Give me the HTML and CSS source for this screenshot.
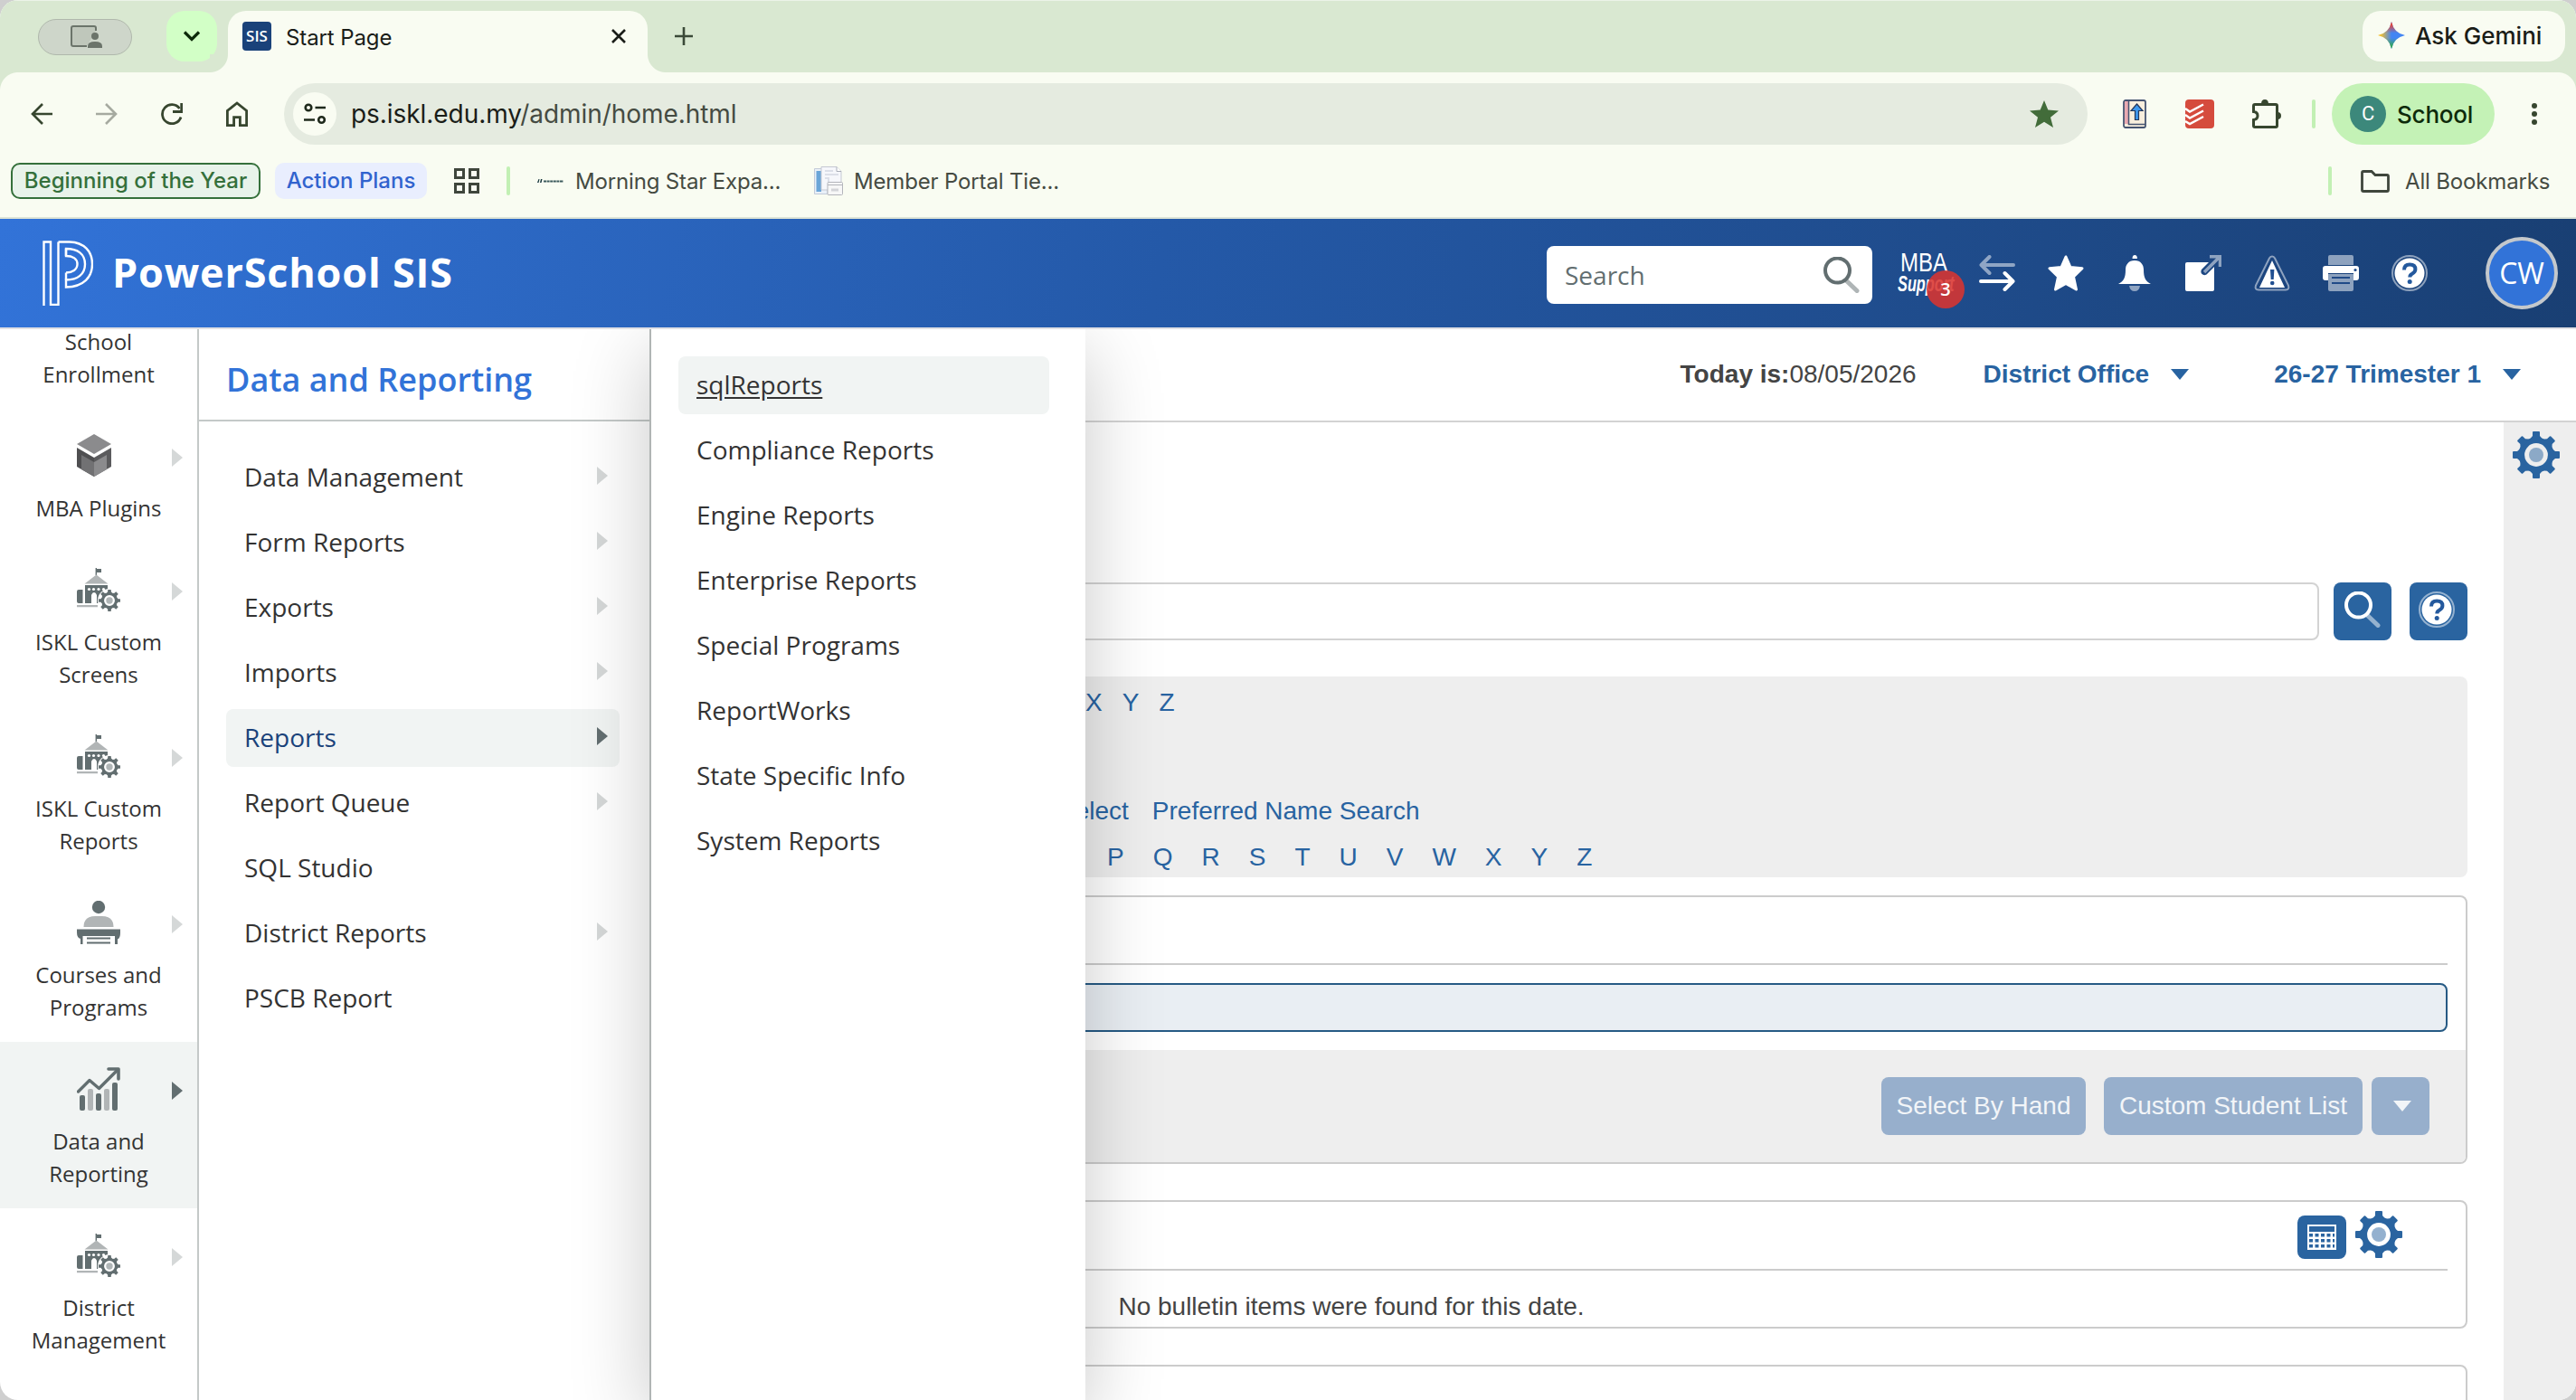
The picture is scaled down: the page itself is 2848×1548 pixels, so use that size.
FILE: index.html
```html
<!DOCTYPE html>
<html lang="en">
<head>
    <meta charset="UTF-8">
    <title>Start Page</title>
    <link rel="stylesheet" href="styles.css">
</head>
<body>
    <!-- Shared icons -->
    <svg class="defs" width="0" height="0">
        <symbol id="i-gear" viewBox="-26 -26 52 52">
            <circle r="16.200" fill="none" stroke="currentColor" stroke-width="6.600"/>
            <g fill="currentColor">
                <path id="tooth" d="M-7.500-17L-4-21V-25q0-1 1-1H3q1 0 1 1V-21L7.500-17z"/>
                <use href="#tooth" transform="rotate(45)"/>
                <use href="#tooth" transform="rotate(90)"/>
                <use href="#tooth" transform="rotate(135)"/>
                <use href="#tooth" transform="rotate(180)"/>
                <use href="#tooth" transform="rotate(225)"/>
                <use href="#tooth" transform="rotate(270)"/>
                <use href="#tooth" transform="rotate(315)"/>
            </g>
            <circle r="8" fill="currentColor" opacity=".5"/>
        </symbol>
        <symbol id="i-school" viewBox="0 0 48 48">
            <path fill="#626e70" d="M20.600 0H22v1h5v4h-5v3h-1.400zM9 19h25v2H9zM0 26q0-2 2-2h4.500v15H2q-2 0-2-2z"/>
            <path fill="#b1b5b6" d="M21.500 7.500L34.500 17.500H8.500zM0 41h23v2.200H0z"/>
            <path fill="#626e70" fill-rule="evenodd" d="M9 19h25v5h-4l-3 5-3 3v7h-2V30q-1-3-3-3t-3 3v9H9z"/>
            <g fill="#fff"><circle cx="13.500" cy="23.500" r="1.600"/><circle cx="18.500" cy="23.500" r="1.600"/><circle cx="24" cy="23.500" r="1.600"/><circle cx="29.500" cy="23.500" r="1.600"/><circle cx="36" cy="36" r="13"/></g>
            <svg x="24" y="24" width="24" height="24" color="#626e70"><use href="#i-gear"/></svg>
        </symbol>
        <symbol id="i-search" viewBox="0 0 40 40">
            <path d="M26 27l11 10.500" stroke="currentColor" stroke-width="5" stroke-linecap="round" opacity=".5"/>
            <circle cx="15.500" cy="15" r="13.500" fill="none" stroke="currentColor" stroke-width="4"/>
        </symbol>
        <symbol id="i-help" viewBox="0 0 40 40">
            <circle cx="20" cy="20" r="19" fill="none" stroke="#fff" stroke-opacity=".5" stroke-width="2"/>
            <circle cx="20" cy="20" r="16.500" fill="#fff"/>
            <path d="M14 16.500q0-6 6.200-6t6.200 5.200q0 3-3.600 5-2.500 1.300-2.500 3.800" fill="none" stroke="#24599d" stroke-width="4"/>
            <circle cx="20.200" cy="29.500" r="2.500" fill="#24599d"/>
        </symbol>
    </svg>

    <div class="window">
        <!-- Tab strip -->
        <div class="tabstrip">
            <div class="share-pill">
                <svg width="36" height="26" viewBox="0 0 36 26"><path d="M18 23H3q-2 0-2-2V3q0-2 2-2h23q2 0 2 2v3" fill="#bfc7bb" stroke="#6b746a" stroke-width="2"/><circle cx="27" cy="12" r="4" fill="#6b746a"/><path d="M19 25v-2q0-5 8-5t8 5v2z" fill="#6b746a"/></svg>
            </div>
            <div class="tab-search"><svg width="20" height="12" viewBox="0 0 20 12"><path d="M2 1.500l8 8 8-8" fill="none" stroke="#0d2a0a" stroke-width="3.200"/></svg></div>
            <div class="tab">
                <span class="favicon">SIS</span>
                <span class="tab-title">Start Page</span>
                <svg width="16" height="16" viewBox="0 0 16 16"><path d="M1 1l14 14M15 1L1 15" stroke="#1a1d18" stroke-width="2.600"/></svg>
            </div>
            <svg class="plus" width="20" height="20" viewBox="0 0 20 20"><path d="M10 0v20M0 10h20" stroke="#3b4a38" stroke-width="2.600"/></svg>
            <div class="gemini">
                <svg width="30" height="30" viewBox="0 0 30 30">
                    <defs>
                        <linearGradient id="g1" x1="0" x2="1"><stop offset=".1" stop-color="#f4c02c"/><stop offset=".5" stop-color="#4285f4"/></linearGradient>
                        <linearGradient id="g2" x1="0" x2="0" y1="0" y2="1"><stop offset=".1" stop-color="#ea4335"/><stop offset=".42" stop-color="#ea4335" stop-opacity="0"/><stop offset=".6" stop-color="#34a853" stop-opacity="0"/><stop offset=".9" stop-color="#34a853"/></linearGradient>
                    </defs>
                    <path d="M15 0Q17.500 12.500 30 15 17.500 17.500 15 30 12.500 17.500 0 15 12.500 12.500 15 0z" fill="url(#g1)"/>
                    <path d="M15 0Q17.500 12.500 30 15 17.500 17.500 15 30 12.500 17.500 0 15 12.500 12.500 15 0z" fill="url(#g2)"/>
                </svg>
                <span>Ask Gemini</span>
            </div>
        </div>

        <!-- Toolbar -->
        <div class="toolbar">
            <div class="nav-icons">
                <svg width="24" height="24" viewBox="0 0 24 24"><path d="M24 12H2M13 1L2 12l11 11" fill="none" stroke="#37462f" stroke-width="2.600"/></svg>
                <svg width="24" height="24" viewBox="0 0 24 24"><path d="M0 12h22M11 1l11 11-11 11" fill="none" stroke="#a6aaa0" stroke-width="2.600"/></svg>
                <svg width="24" height="24" viewBox="0 0 24 24"><path d="M22 15.500A10.500 10.500 0 1 1 20.500 6" fill="none" stroke="#37462f" stroke-width="2.800"/><path d="M22.700 0v9.500H13" fill="none" stroke="#37462f" stroke-width="2.800"/></svg>
                <svg width="24" height="28" viewBox="0 0 24 28"><path d="M1.400 26.600V10.500L12 2l10.600 8.500v16.100H15.400v-9H8.600v9z" fill="none" stroke="#37462f" stroke-width="2.800"/></svg>
            </div>
            <div class="omnibox">
                <span class="site-info"><svg width="24" height="24" viewBox="0 0 24 24"><g fill="none" stroke="#1f2a1c" stroke-width="2.600"><circle cx="5" cy="5" r="3.300"/><path d="M12.500 5H24M0 18.500h12"/><circle cx="19.500" cy="18.500" r="3.300"/></g></svg></span>
                <span class="url"><b>ps.iskl.edu.my</b>/admin/home.html</span>
                <svg width="32" height="30" viewBox="0 0 32 30"><path d="M16 0l4.300 10.600L32 11.400l-9 7.400L26 30l-10-6.200L6 30l3-11.200-9-7.400 11.700-.8z" fill="#426c3a"/></svg>
            </div>
            <svg class="ext-book" width="26" height="32" viewBox="0 0 26 32"><rect x="1" y="1" width="24" height="30" rx="2" fill="#f8eedd" stroke="#465472" stroke-width="1.800"/><path d="M2 2h4.500v25H2z" fill="#e9a9b1"/><path d="M6.500 1v26.500H25" fill="none" stroke="#465472" stroke-width="1.500"/><path d="M15.500 5l6.500 7.500h-4.500v10h-4v-10H9z" fill="#3f98ee" stroke="#23365a" stroke-width="1.200"/></svg>
            <svg class="ext-todo" width="32" height="32" viewBox="0 0 32 32"><rect width="32" height="32" rx="4" fill="#d54b3d"/><path d="M0 10l5 3.500L20 5.500M0 17l5 3.500 15-8M0 24l5 3 15-8" fill="none" stroke="#fff" stroke-width="2.400"/></svg>
            <svg class="ext-puzzle" width="32" height="32" viewBox="0 0 32 32"><path d="M3 5.500H26q1.500 0 1.500 1.500V29q0 1.500-1.500 1.500H3q-1.500 0-1.500-1.500v-6.500q4.500-.5 4.500-4.500T1.500 13.500V7q0-1.500 1.500-1.500z" fill="none" stroke="#37462f" stroke-width="3"/><path d="M10 5q0-5 4-5t4 5zM28 14q4 0 4 4t-4 4z" fill="#37462f"/></svg>
            <span class="divider"></span>
            <div class="profile"><span class="profile-dot">C</span>School</div>
            <svg class="dots" width="6" height="24" viewBox="0 0 6 24"><g fill="#37462f"><circle cx="3" cy="3" r="3"/><circle cx="3" cy="12" r="3"/><circle cx="3" cy="21" r="3"/></g></svg>
        </div>

        <!-- Bookmarks -->
        <div class="bookmarks">
            <span class="chip chip-green">Beginning of the Year</span>
            <span class="chip chip-blue">Action Plans</span>
            <svg class="apps" width="28" height="28" viewBox="0 0 28 28"><g fill="none" stroke="#3f463c" stroke-width="3"><path d="M1.500 1.500h9v9h-9zM17.500 1.500h9v9h-9zM1.500 17.500h9v9h-9zM17.500 17.500h9v9h-9z"/></g></svg>
            <span class="divider"></span>
            <svg class="fav-star" width="30" height="6" viewBox="0 0 30 6"><path d="M1 5L2.500 1h1L2.500 5zM4 5l1-4h1.500l-1 4z" fill="#12333a"/><path d="M8 3.500h22" stroke="#3c5a5d" stroke-width="2" stroke-dasharray="3 .6"/></svg>
            <span class="bm bm-star">Morning Star Expa...</span>
            <svg class="fav-doc" width="32" height="32" viewBox="0 0 32 32"><path d="M.5 2.500H15v28H.5z" fill="#e9f0f8" stroke="#c3cbd8"/><path d="M2.500 5H8v23H2.500z" fill="#6aa5d8"/><path d="M8 .5h17l5 5V26H8z" fill="#f6f7fb" stroke="#c5c8d2"/><path d="M25 .5v5h5" fill="#fff" stroke="#a9adb8"/><path d="M12 5h9M12 9h15M12 13h4v10" stroke="#dcdfe8" stroke-width="2" fill="none"/><rect x="15" y="17.500" width="16.500" height="14" rx="1" fill="#f7f7f7" stroke="#b3b5bb"/><path d="M15 20.500h16.500" stroke="#b3b5bb"/><path d="M19 26h8" stroke="#d3d4d8" stroke-width="3"/></svg>
            <span class="bm">Member Portal Tie...</span>
            <span class="divider divider-end"></span>
            <svg class="folder" width="32" height="25" viewBox="0 0 32 25"><path d="M1.500 3q0-1.500 1.500-1.500h9L16 5.500h13q1.500 0 1.500 1.500v15q0 1.500-1.500 1.500H3q-1.500 0-1.500-1.500z" fill="none" stroke="#3f463c" stroke-width="2.800"/></svg>
            <span class="bm bm-all">All Bookmarks</span>
        </div>

        <!-- App header -->
        <header class="header">
            <svg class="logo" width="56" height="72" viewBox="0 0 56 72"><g fill="none" stroke="#fff" stroke-width="2.400"><path d="M1.500 72V1.500H9V72M17.500 1.500V71H9M17.500 1.500H30C46 2 55 12 55 26S46 51 26 51.500V43.500C39 43.500 47 37 47 26S39 9 26 9V17C33 17 38.500 20 38.500 26S33 35.500 26 35.500"/><path d="M26 9v8M26 35.500v8"/></g></svg>
            <span class="brand">PowerSchool SIS</span>
            <div class="search"><span>Search</span><svg width="40" height="40"><use href="#i-search"/></svg></div>
            <div class="mba">
                <span class="mba-top">MBA</span>
                <span class="mba-bottom">Support</span>
                <span class="badge">3</span>
            </div>
            <div class="actions">
                <svg width="40" height="40" viewBox="0 0 40 40"><g fill="none" stroke="#fff" stroke-width="4" stroke-linecap="round" stroke-linejoin="round"><path d="M38 11H3M11.500 2L2.500 11l9 9" opacity=".5"/><path d="M2 29h35M28.500 20l9 9-9 9"/></g></svg>
                <svg width="40" height="40" viewBox="0 0 40 40"><path d="M20 2l5 11.500 13 1.200-9.500 9.300 3 14L20 31.500 8.500 38l3-14L2 14.700l13-1.200z" fill="#fff" stroke="#fff" stroke-width="3" stroke-linejoin="round"/></svg>
                <svg width="40" height="40" viewBox="0 0 40 40"><path d="M17.500 4q0-4 2.700-4t2.700 4z" fill="#fff"/><path d="M20 6c7 0 10 5 10 10 0 9 2 13 8 16H2c6-3 8-7 8-16 0-5 3-10 10-10z" fill="#fff"/><path d="M14 34h12q-1 6-6 6t-6-6z" fill="#fff" opacity=".5"/></svg>
                <svg width="40" height="40" viewBox="0 0 40 40"><path d="M0 10q0-2 2-2h24l-8 8q-1.500 3 .5 5t5 .5L32 13v25q0 2-2 2H2q-2 0-2-2z" fill="#fff"/><path d="M21 19L37 3M27 1.700h11.500V13" fill="none" stroke="#fff" stroke-width="3.500" opacity=".5"/></svg>
                <svg width="40" height="40" viewBox="0 0 40 40"><path d="M20 1.500q2 0 3 2l15 30q1.500 5-3 5H5q-4.500 0-3-5l15-30q1-2 3-2z" fill="none" stroke="#fff" stroke-width="2" opacity=".5"/><path d="M20 6l14 30H6z" fill="#fff"/><path d="M18 16h4.400l-.7 11h-3z" fill="#204f91"/><circle cx="20.200" cy="31" r="2.300" fill="#204f91"/></svg>
                <svg width="40" height="40" viewBox="0 0 40 40"><path d="M6 11V2q0-2 2-2h24q2 0 2 2v9z" fill="#fff" opacity=".5"/><path d="M0 15q0-3 3-3h34q3 0 3 3v10q0 3-3 3h-3v-8H6v8H3q-3 0-3-3z" fill="#fff"/><path d="M6 21h28v17q0 2-2 2H8q-2 0-2-2z" fill="#fff" opacity=".5"/><path d="M10 25h20M10 31h20" stroke="#204a87" stroke-width="2.200"/><circle cx="36" cy="16.500" r="1.600" fill="#204a87"/></svg>
                <svg width="40" height="40"><use href="#i-help"/></svg>
            </div>
            <div class="avatar">CW</div>
        </header>

        <div class="app">
            <!-- Left rail -->
            <nav class="rail">
                <div class="rail-item"><span class="rail-icon"></span><span class="rail-label">School<br>Enrollment</span></div>
                <div class="rail-item">
                    <svg class="rail-icon" viewBox="0 0 48 48"><path d="M19 0l19 11-19 11L0 11z" fill="#8b8b8d"/><path d="M0 15l19 11v21L0 36z" fill="#4f4f51"/><path d="M38 15L19 26v21l19-11z" fill="#5b5b5d"/><path d="M5 23l14 8v16L5 39z" fill="#717173"/><path d="M33 23l-14 8v16l14-8z" fill="#8b8b8d"/></svg>
                    <span class="rail-label">MBA Plugins</span><i class="caret"></i>
                </div>
                <div class="rail-item"><svg class="rail-icon"><use href="#i-school"/></svg><span class="rail-label">ISKL Custom<br>Screens</span><i class="caret"></i></div>
                <div class="rail-item"><svg class="rail-icon"><use href="#i-school"/></svg><span class="rail-label">ISKL Custom<br>Reports</span><i class="caret"></i></div>
                <div class="rail-item">
                    <svg class="rail-icon" viewBox="0 0 48 48"><circle cx="24" cy="7" r="7.200" fill="#626e70"/><path d="M7.500 29q0-12 13-12h7q13 0 13 12z" fill="#b1b5b6"/><path d="M0 31.500h48v4q0 6-3 7v5.500h-3v-9H6.500v9H4v-6q-4-1-4-7z" fill="#626e70"/><path d="M11 41.500h26M11 46.500h26" stroke="#626e70" stroke-width="2.200"/></svg>
                    <span class="rail-label">Courses and<br>Programs</span><i class="caret"></i>
                </div>
                <div class="rail-item active">
                    <svg class="rail-icon" viewBox="0 0 48 48"><path d="M1.500 27L14 14.500l10.500 9L45 3" fill="none" stroke="#626e70" stroke-width="3.400" stroke-linejoin="round" stroke-linecap="round"/><path d="M35 2h11v11" fill="none" stroke="#626e70" stroke-width="3.600" stroke-linecap="round" stroke-linejoin="round"/><g fill="#626e70"><rect x="3" y="31" width="6" height="17" rx="2"/><rect x="21" y="29" width="6" height="19" rx="2"/><rect x="39" y="17" width="6" height="31" rx="2"/></g><g fill="#b1b5b6"><rect x="12" y="24" width="6" height="24" rx="2"/><rect x="30" y="24" width="6" height="24" rx="2"/></g></svg>
                    <span class="rail-label">Data and<br>Reporting</span><i class="caret"></i>
                </div>
                <div class="rail-item"><svg class="rail-icon"><use href="#i-school"/></svg><span class="rail-label">District<br>Management</span><i class="caret"></i></div>
            </nav>

            <!-- Second level menu -->
            <nav class="submenu">
                <h2>Data and Reporting</h2>
                <ul>
                    <li>Data Management<i class="caret"></i></li>
                    <li>Form Reports<i class="caret"></i></li>
                    <li>Exports<i class="caret"></i></li>
                    <li>Imports<i class="caret"></i></li>
                    <li class="active">Reports<i class="caret"></i></li>
                    <li>Report Queue<i class="caret"></i></li>
                    <li>SQL Studio</li>
                    <li>District Reports<i class="caret"></i></li>
                    <li>PSCB Report</li>
                </ul>
            </nav>

            <!-- Third level menu -->
            <nav class="flyout">
                <ul>
                    <li class="active"><a>sqlReports</a></li>
                    <li>Compliance Reports</li>
                    <li>Engine Reports</li>
                    <li>Enterprise Reports</li>
                    <li>Special Programs</li>
                    <li>ReportWorks</li>
                    <li>State Specific Info</li>
                    <li>System Reports</li>
                </ul>
            </nav>

            <main class="main">
                <div class="context">
                    <span class="today"><b>Today is:</b>08/05/2026</span>
                    <span class="picker school">District Office<i></i></span>
                    <span class="picker">26-27 Trimester 1<i></i></span>
                </div>
                <div class="page">
                    <div class="content">
                        <div class="search-row">
                            <div class="search-field"></div>
                            <div class="btn-icon"><svg width="40" height="40"><use href="#i-search"/></svg></div>
                            <div class="btn-icon"><svg width="40" height="40"><use href="#i-help"/></svg></div>
                        </div>
                        <div class="links">
                            <div class="letters first"><a>X</a><a>Y</a><a>Z</a></div>
                            <div class="filters"><a>Select</a><a>Preferred Name Search</a></div>
                            <div class="letters second"><a>P</a><a>Q</a><a>R</a><a>S</a><a>T</a><a>U</a><a>V</a><a>W</a><a>X</a><a>Y</a><a>Z</a></div>
                        </div>
                        <section class="card selection">
                            <div class="card-head"></div>
                            <div class="info"></div>
                            <div class="card-foot">
                                <span class="btn hand">Select By Hand</span>
                                <span class="btn list">Custom Student List</span>
                                <span class="btn more"><i></i></span>
                            </div>
                        </section>
                        <section class="card bulletin">
                            <div class="card-head">
                                <span class="calendar"><svg width="32" height="28" viewBox="0 0 32 28"><path d="M0 0h32v28H0z" fill="#fff"/><path d="M2 2h28v6H2z" fill="#2a64a0"/><path d="M2 11.700h28M2 17.700h28M2 23.700h28" stroke="#2a64a0" stroke-width="3.400" stroke-dasharray="4 2.500"/></svg></span>
                                <svg class="gear" width="52" height="52"><use href="#i-gear"/></svg>
                            </div>
                            <p>No bulletin items were found for this date.</p>
                        </section>
                        <section class="card last"></section>
                    </div>
                    <aside class="drawer"><svg class="gear" width="52" height="52"><use href="#i-gear"/></svg></aside>
                </div>
            </main>
        </div>
    </div>
</body>
</html>
```
FILE: styles.css
```css
* {
    margin: 0;
    padding: 0;
    box-sizing: border-box;
}

body {
    background: #cfcfcf;
    font-family: "Open Sans", sans-serif;
    font-size: 28px;
    color: #333;
}

svg {
    display: block;
    flex-shrink: 0;
}

.defs {
    position: absolute;
}

.window {
    width: 2848px;
    height: 1548px;
    display: flex;
    flex-direction: column;
    border-radius: 20px;
    overflow: hidden;
    background: #fff;
}

/* Browser chrome */
.tabstrip {
    height: 80px;
    padding: 11px 12px 0 42px;
    display: flex;
    flex-shrink: 0;
    background: #d9e8d1;
    border-top: 1px solid #ecf3e8;
    font-family: Inter, sans-serif;
    color: #1a1d18;
}

.share-pill {
    width: 104px;
    height: 40px;
    margin: 9px 38px 0 0;
    padding-left: 4px;
    border: 1px solid #b0b8ac;
    border-radius: 20px;
    background: #ced6ca;
    display: flex;
    align-items: center;
    justify-content: center;
}

.tab-search {
    width: 56px;
    height: 56px;
    border-radius: 20px;
    background: #d2ffc6;
    display: flex;
    align-items: center;
    justify-content: center;
}

.tab {
    position: relative;
    width: 464px;
    height: 68px;
    margin-left: 12px;
    padding: 0 24px 12px 16px;
    border-radius: 20px 20px 0 0;
    background: #f9fcf2;
    display: flex;
    align-items: center;
}

/* flared tab feet */
.tab::before,
.tab::after {
    content: "";
    position: absolute;
    bottom: 0;
    width: 20px;
    height: 20px;
}

.tab::before {
    left: -20px;
    background: radial-gradient(circle at 0 0, #d9e8d1 19.5px, #f9fcf2 20.5px);
}

.tab::after {
    right: -20px;
    background: radial-gradient(circle at 100% 0, #d9e8d1 19.5px, #f9fcf2 20.5px);
}

.favicon {
    width: 32px;
    height: 32px;
    border-radius: 4px;
    background: #1a427a;
    color: #fff;
    font: 600 17px/32px "Open Sans", sans-serif;
    text-align: center;
}

.tab-title {
    flex: 1;
    margin-left: 16px;
    padding-top: 2px;
    font-size: 24px;
    letter-spacing: -0.1px;
}

.plus {
    margin: 18px 0 0 30px;
}

.gemini {
    width: 224px;
    height: 56px;
    margin-left: auto;
    padding: 0 0 2px 17px;
    border-radius: 20px;
    background: #f9fcf2;
    display: flex;
    align-items: center;
    gap: 11px;
    font-size: 26px;
    font-weight: 500;
}

.toolbar {
    height: 80px;
    padding: 12px 43px 0 34px;
    display: flex;
    flex-shrink: 0;
    align-items: center;
    /* rounded top corners over the tab strip colour */
    background:
        radial-gradient(circle at 20px 20px, #f9fcf2 19.5px, #d9e8d1 20.5px) 0 0 / 20px 20px no-repeat,
        radial-gradient(circle at 0 20px, #f9fcf2 19.5px, #d9e8d1 20.5px) 100% 0 / 20px 20px no-repeat,
        #f9fcf2;
    font-family: Inter, sans-serif;
}

.nav-icons {
    display: flex;
    align-items: center;
    gap: 48px;
    margin-right: 40px;
}

.omnibox {
    width: 1994px;
    height: 68px;
    padding: 0 32px 0 10px;
    border-radius: 34px;
    background: #e5ebe0;
    display: flex;
    align-items: center;
}

.site-info {
    width: 48px;
    height: 48px;
    border-radius: 50%;
    background: #f9fcf2;
    display: flex;
    align-items: center;
    justify-content: center;
}

.url {
    flex: 1;
    margin-left: 16px;
    font-size: 28px;
    letter-spacing: -0.06px;
    color: #454b42;
}

.url b {
    font-weight: 400;
    color: #1a1d18;
}

.ext-book {
    margin-left: 39px;
}

.ext-todo {
    margin-left: 43px;
}

.ext-puzzle {
    margin-left: 42px;
}

.divider {
    width: 4px;
    height: 32px;
    border-radius: 2px;
    background: #c2f0b4;
}

.toolbar .divider {
    margin: 0 18px 0 34px;
}

.profile {
    width: 180px;
    height: 68px;
    padding-left: 20px;
    border-radius: 34px;
    background: #c4f2b6;
    display: flex;
    align-items: center;
    gap: 12px;
    font-size: 26px;
    font-weight: 500;
    letter-spacing: -0.2px;
    color: #0d2a0a;
}

.profile-dot {
    width: 40px;
    height: 40px;
    border-radius: 50%;
    background: #3c887b;
    color: #fff;
    font: 22px/40px Roboto, sans-serif;
    text-align: center;
}

.dots {
    margin-left: 41px;
}

.bookmarks {
    height: 82px;
    padding: 0 30px 0 12px;
    display: flex;
    flex-shrink: 0;
    align-items: center;
    background: #f9fcf2;
    border-bottom: 2px solid #dce3d6;
    font-family: Inter, sans-serif;
    font-size: 24px;
    color: #454b42;
    white-space: nowrap;
}

.bm {
    letter-spacing: -0.16px;
}

.chip {
    height: 40px;
    border-radius: 10px;
    line-height: 40px;
    font-weight: 500;
    text-align: center;
}

.chip-green {
    width: 276px;
    border: 2px solid #35703b;
    line-height: 35px;
    background: #e8f3ea;
    color: #35703b;
}

.chip-blue {
    width: 168px;
    margin-left: 16px;
    background: #e9eefe;
    color: #3163ce;
    line-height: 39px;
}

.apps {
    margin: 0 30px;
}

.fav-star {
    margin: 0 13px 0 29px;
}

.bm-star {
    width: 264px;
}

.fav-doc {
    margin-right: 12px;
}

.divider-end {
    margin-left: auto;
}

.folder {
    margin: 0 17px 0 32px;
}

.bm-all {
    width: 159px;
}

/* App header */
.header {
    height: 122px;
    padding: 0 20px 0 47px;
    display: flex;
    flex-shrink: 0;
    align-items: center;
    background: linear-gradient(100deg, #3273d8 0%, #2459a8 45%, #1f4c8c 75%, #193f73 100%);
    border-bottom: 2px solid #e0e0e4;
    color: #fff;
}

.brand {
    flex: 1;
    margin: 0 0 4px 21px;
    font-size: 45px;
    font-weight: 700;
    letter-spacing: 0.8px;
    white-space: nowrap;
}

.search {
    width: 360px;
    height: 64px;
    margin-top: 4px;
    padding: 0 14px 0 20px;
    border-radius: 8px;
    background: #fff;
    color: #626e70;
    display: flex;
    align-items: center;
    justify-content: space-between;
}

.mba {
    position: relative;
    width: 60px;
    margin: 0 30px 0 28px;
    font-family: "Liberation Sans", Arial, sans-serif;
}

.mba span {
    display: block;
    transform-origin: 0 50%;
}

.mba-top {
    margin-left: 3px;
    font-size: 30px;
    line-height: 24px;
    transform: scaleX(.8);
}

.mba-bottom {
    font-size: 24px;
    line-height: 24px;
    font-weight: bold;
    font-style: italic;
    transform: scaleX(.68);
}

.mba .badge {
    position: absolute;
    left: 32px;
    top: 21px;
    width: 42px;
    height: 42px;
    border-radius: 50%;
    background: rgba(217, 52, 48, .88);
    font: 600 20px/42px "Open Sans", sans-serif;
    text-align: center;
}

.actions {
    display: flex;
    gap: 36px;
}

.avatar {
    width: 80px;
    height: 80px;
    margin-left: 64px;
    border: 4px solid #c4c8cc;
    border-radius: 50%;
    background: #3273d8;
    font-size: 32px;
    line-height: 72px;
    text-align: center;
}

/* Menus */
.app {
    position: relative;
    flex: 1;
    min-height: 0;
    display: flex;
    overflow: hidden;
}

.caret {
    border-left: 12px solid #d5d8d8;
    border-top: 10px solid transparent;
    border-bottom: 10px solid transparent;
}

.active .caret {
    border-left-color: #626e70;
}

.rail {
    width: 220px;
    padding-bottom: 28px;
    border-right: 2px solid #c4c9c8;
    display: flex;
    flex-direction: column;
    justify-content: flex-end;
    overflow: hidden;
    flex-shrink: 0;
}

.rail-item {
    position: relative;
    padding: 28px 0 20px;
    display: flex;
    flex-direction: column;
    align-items: center;
    flex-shrink: 0;
}

.rail-item.active {
    background: #f1f4f3;
}

.rail-icon {
    width: 48px;
    height: 48px;
}

.rail-label {
    margin-top: 16px;
    font-size: 24px;
    line-height: 36px;
    text-align: center;
}

.rail-item .caret {
    position: absolute;
    left: 190px;
    top: 44px;
}

.submenu {
    position: absolute;
    left: 220px;
    top: 0;
    bottom: 0;
    width: 500px;
    background: #fff;
    z-index: 1;
}

.submenu h2 {
    height: 102px;
    padding-left: 30px;
    border-bottom: 2px solid #c4c9c8;
    color: #3273d8;
    font-size: 36px;
    font-weight: 600;
    line-height: 112px;
    white-space: nowrap;
}

.submenu ul,
.flyout ul {
    list-style: none;
    padding: 30px 35px 0 30px;
    display: flex;
    flex-direction: column;
    gap: 8px;
}

.submenu li,
.flyout li {
    height: 64px;
    padding: 0 13px 3px 20px;
    border-radius: 8px;
    display: flex;
    align-items: center;
    justify-content: space-between;
}

.submenu li .caret {
    margin-bottom: 1px;
}

.submenu li.active {
    background: #f1f4f3;
    color: #1a427a;
}

.flyout {
    position: absolute;
    left: 718px;
    top: 0;
    bottom: 0;
    width: 482px;
    background: #fff;
    border-left: 2px solid #b0b5b4;
    box-shadow: 0 24px 80px rgba(0, 0, 0, .22);
    z-index: 2;
}

.flyout ul {
    padding-right: 40px;
}

.flyout li.active {
    background: #f1f4f3;
    text-decoration: underline;
    text-underline-offset: 3px;
}

/* Page */
.main {
    flex: 1;
    display: flex;
    flex-direction: column;
    font-family: "Liberation Sans", Arial, sans-serif;
    color: #444;
}

.context {
    height: 103px;
    padding: 0 61px 2px 0;
    border-bottom: 2px solid #d3d3d3;
    display: flex;
    flex-shrink: 0;
    align-items: center;
    justify-content: flex-end;
}

.picker {
    margin-left: 75px;
    display: flex;
    align-items: center;
    color: #2863a1;
    font-weight: bold;
}

.picker i,
.more i {
    border-top: 12px solid #2863a1;
    border-left: 10px solid transparent;
    border-right: 10px solid transparent;
}

.picker i {
    margin-left: 24px;
}

.picker.school {
    margin-left: 74px;
    margin-right: 19px;
}

.page {
    flex: 1;
    min-height: 0;
    display: flex;
}

.content {
    flex: 1;
    padding: 177px 40px 0;
    display: flex;
    flex-direction: column;
}

.content > * {
    flex-shrink: 0;
}

.search-row {
    height: 64px;
    display: flex;
}

.search-field {
    flex: 1;
    border: 2px solid #d3d3d3;
    border-radius: 8px;
    margin-right: 16px;
}

.btn-icon {
    width: 64px;
    height: 64px;
    border-radius: 8px;
    background: #2a64a0;
    color: #fff;
    padding: 10px 12px;
}

.btn-icon + .btn-icon {
    margin-left: 20px;
    padding-left: 10px;
}

.links {
    height: 222px;
    margin-top: 40px;
    border-radius: 8px;
    background: #eee;
    color: #2863a1;
    padding-top: 13px;
}

.links > div {
    display: flex;
    line-height: 32px;
}

.links .first {
    gap: 22px;
    padding-left: 940px;
}

.links .filters {
    gap: 26px;
    margin-top: 88px;
    padding-left: 910px;
}

.links .second {
    gap: 32px;
    margin-top: 19px;
    padding-left: 964px;
}

.card {
    border: 2px solid #ccc;
    border-radius: 8px;
}

.card-head {
    margin: 0 20px;
    height: 75px;
    border-bottom: 2px solid #ccc;
}

.selection {
    height: 297px;
    margin-top: 20px;
    overflow: hidden;
}

.info {
    height: 54px;
    margin: 20px 20px;
    border: 2px solid #265a84;
    border-radius: 8px;
    background: #e9eef3;
}

.card-foot {
    height: 124px;
    padding-right: 40px;
    background: #eee;
    display: flex;
    align-items: center;
    justify-content: flex-end;
}

.btn {
    height: 64px;
    border-radius: 8px;
    background: #97afcc;
    color: #f2f5f8;
    line-height: 64px;
    text-align: center;
}

.hand {
    width: 226px;
    margin-right: 20px;
}

.list {
    width: 286px;
    margin-right: 10px;
}

.more {
    width: 64px;
    display: flex;
    align-items: center;
    justify-content: center;
}

.more i {
    border-top-color: #f2f5f8;
    margin-left: 4px;
}

.bulletin {
    height: 142px;
    margin-top: 40px;
    text-align: center;
}

.bulletin .card-head {
    height: 76px;
    padding: 10px 50px 0 0;
    display: flex;
    justify-content: flex-end;
    gap: 10px;
}

.bulletin p {
    line-height: 32px;
    margin-top: 24px;
}

.calendar {
    width: 54px;
    height: 48px;
    margin-top: 5px;
    padding: 10px 11px;
    border-radius: 8px;
    background: #2a64a0;
}

.gear {
    color: #2a64a0;
}

.last {
    height: 100px;
    margin-top: 40px;
}

.drawer {
    width: 80px;
    padding: 10px;
    background: #eee;
}
```
